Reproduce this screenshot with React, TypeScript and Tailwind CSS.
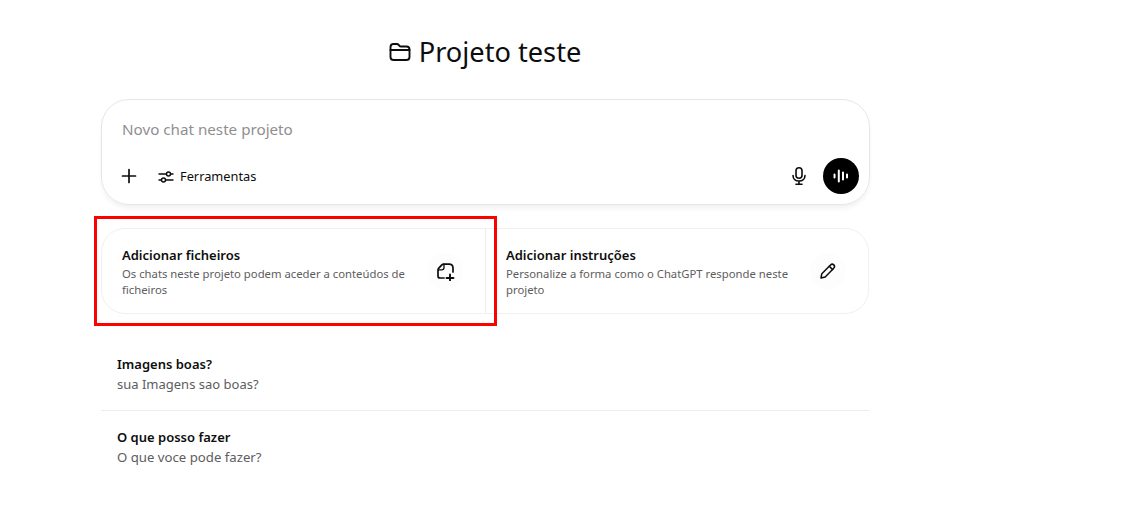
import React from "react";

const font = { fontFamily: '"Noto Sans", "Open Sans", sans-serif' };

function FolderIcon() {
  return (
    <svg width="22" height="20" viewBox="0 0 22 20" fill="none" stroke="#0d0d0d" strokeWidth="1.900" strokeLinejoin="round" strokeLinecap="round">
      <path d="M1.500 5.200C1.500 3.400 2.800 2 4.600 2h3.200c1 0 1.500.4 2.100 1.100l.6.700c.4.500.8.700 1.500.7h5.400c1.900 0 3.100 1.200 3.100 3v7.400c0 1.800-1.300 3.100-3.100 3.100H4.600c-1.800 0-3.100-1.300-3.100-3.100V5.200z" />
      <path d="M1.500 8h19" />
    </svg>
  );
}

function PlusIcon() {
  return (
    <svg width="20" height="20" viewBox="0 0 20 20" fill="none" stroke="#0d0d0d" strokeWidth="1.700" strokeLinecap="round">
      <path d="M10 3.500v13M3.500 10h13" />
    </svg>
  );
}

function ToolsIcon() {
  return (
    <svg width="16" height="16" viewBox="0 0 16 16" fill="none" stroke="#0d0d0d" strokeWidth="1.400" strokeLinecap="round">
      <path d="M1 5h7.500M12.500 5H15M1 11h2.500M7.500 11H15" />
      <circle cx="10.500" cy="5" r="2" />
      <circle cx="5.500" cy="11" r="2" />
    </svg>
  );
}

function MicIcon() {
  return (
    <svg width="20" height="20" viewBox="0 0 20 20" fill="none" stroke="#0d0d0d" strokeWidth="1.600" strokeLinecap="round">
      <rect x="7" y="1.800" width="6" height="10.500" rx="3" />
      <path d="M4 9.500c0 3.500 2.600 5.500 6 5.500s6-2 6-5.500M10 15v3M7 18.200h6" />
    </svg>
  );
}

function VoiceIcon() {
  return (
    <svg width="18" height="16" viewBox="0 0 18 16" fill="none" stroke="#fff" strokeWidth="2" strokeLinecap="round">
      <path d="M2.500 6.500v3M6.800 2.500v11M11 4.500v7M15 6.500v3" />
    </svg>
  );
}

function FileAddIcon() {
  return (
    <svg width="20" height="20" viewBox="0 0 20 20" fill="none" stroke="#0d0d0d" strokeWidth="1.700" strokeLinecap="round" strokeLinejoin="round">
      <path d="M9 17H5c-1.200 0-2-.8-2-2V9.200c0-.8.300-1.500.8-2.100l2.800-3c.6-.6 1.300-1 2.200-1H14c2.400 0 4 1.600 4 3.900V11" />
      <path d="M3.200 8.800h3.600c1.300 0 2.200-.9 2.200-2.200V3.200" strokeWidth="1.300" />
      <path d="M15 13.500v7M11.500 17h7" strokeWidth="1.900" />
    </svg>
  );
}

function PencilIcon() {
  return (
    <svg width="18" height="18" viewBox="0 0 18 18" fill="none" stroke="#0d0d0d" strokeWidth="1.500" strokeLinejoin="round" strokeLinecap="round">
      <path d="M2 16l.8-4.300L11.500 3c1-1 2.400-1 3.300-.1.900.9.900 2.300-.1 3.300L6.200 15l-4.200 1z" />
      <path d="M10.300 4.300l3.400 3.300" />
    </svg>
  );
}

export default function App() {
  return (
    <div className="relative h-[530px] w-[1139px] overflow-hidden bg-white" style={font}>
      <div className="ml-[101px] w-[768px] pt-[34px]">
        <h1 className="flex h-9 items-center justify-center gap-[8px] text-[27.200px] font-normal leading-9 text-[#0d0d0d]">
          <FolderIcon />
          <span>Projeto teste</span>
        </h1>

        <div className="mt-[29px] flex h-[106px] w-[769px] flex-col justify-between rounded-[28px] border border-[#e6e6e6] px-[10px] pb-[10px] pt-[19px] shadow-[0_4px_6px_-2px_rgba(0,0,0,0.08)]">
          <div className="pl-[10px] text-[15.200px] leading-5 text-[#8f8f8f]">Novo chat neste projeto</div>
          <div className="flex items-center justify-between">
            <div className="flex items-center gap-[19px] pl-[7px]">
              <PlusIcon />
              <div className="flex items-center gap-[6px] pt-[2px] text-[12.800px] text-[#0d0d0d]">
                <ToolsIcon />
                <span>Ferramentas</span>
              </div>
            </div>
            <div className="flex items-center gap-[14px]">
              <MicIcon />
              <div className="flex h-9 w-9 items-center justify-center rounded-full bg-black">
                <VoiceIcon />
              </div>
            </div>
          </div>
        </div>

        <div className="mt-[23px] flex h-[86px] rounded-[24px] border border-[#f0f0f0]">
          <div className="flex w-[384px] items-center border-r border-[#ececec] pl-5 pr-[22px]">
            <div className="w-[290px] shrink-0">
              <div className="text-[13px] font-semibold leading-[21px] text-[#0d0d0d]">Adicionar ficheiros</div>
              <div className="text-[11.300px] leading-4 text-[#5d5d5d]">Os chats neste projeto podem aceder a conteúdos de ficheiros</div>
            </div>
            <div className="ml-auto flex h-9 w-9 items-center justify-center rounded-full bg-[#fdfdfd]">
              <FileAddIcon />
            </div>
          </div>
          <div className="flex flex-1 items-center pl-5 pr-[22px]">
            <div className="w-[290px] shrink-0">
              <div className="text-[13px] font-semibold leading-[21px] text-[#0d0d0d]">Adicionar instruções</div>
              <div className="text-[11.300px] leading-4 text-[#5d5d5d]">Personalize a forma como o ChatGPT responde neste projeto</div>
            </div>
            <div className="ml-auto flex h-9 w-9 items-center justify-center rounded-full bg-[#fdfdfd]">
              <PencilIcon />
            </div>
          </div>
        </div>

        <div className="mt-[23px]">
          <div className="h-[74px] border-b border-[#ececec] pl-4 pt-[17px]">
            <div className="text-[13px] font-semibold leading-5 text-[#0d0d0d]">Imagens boas?</div>
            <div className="text-[13px] leading-5 text-[#5d5d5d]">sua Imagens sao boas?</div>
          </div>
          <div className="pl-4 pt-[16px]">
            <div className="text-[13px] font-semibold leading-5 text-[#0d0d0d]">O que posso fazer</div>
            <div className="text-[13.200px] leading-5 text-[#5d5d5d]">O que voce pode fazer?</div>
          </div>
        </div>
      </div>

      <div className="absolute left-[94px] top-[216px] h-[110px] w-[403px] border-[3px] border-[#ff0000]" />
    </div>
  );
}
